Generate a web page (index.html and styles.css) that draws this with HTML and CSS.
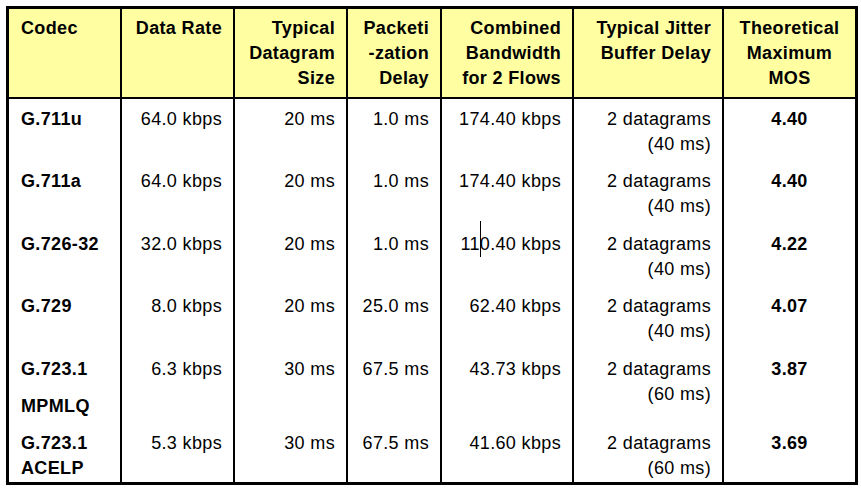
FILE: index.html
```html
<!DOCTYPE html>
<html>
<head>
<meta charset="utf-8">
<link rel="stylesheet" href="styles.css">
</head>
<body>
<div class="codec-table">
  <div class="th left">Codec</div>
  <div class="th">Data Rate</div>
  <div class="th">Typical<br>Datagram<br>Size</div>
  <div class="th">Packeti<br>-zation<br>Delay</div>
  <div class="th">Combined<br>Bandwidth<br>for 2 Flows</div>
  <div class="th">Typical Jitter<br>Buffer Delay</div>
  <div class="th center">Theoretical<br>Maximum<br>MOS</div>

  <div class="td left bold">G.711u</div>
  <div class="td">64.0 kbps</div>
  <div class="td">20 ms</div>
  <div class="td">1.0 ms</div>
  <div class="td">174.40 kbps</div>
  <div class="td">2 datagrams<br>(40 ms)</div>
  <div class="td center bold">4.40</div>

  <div class="td left bold">G.711a</div>
  <div class="td">64.0 kbps</div>
  <div class="td">20 ms</div>
  <div class="td">1.0 ms</div>
  <div class="td">174.40 kbps</div>
  <div class="td">2 datagrams<br>(40 ms)</div>
  <div class="td center bold">4.40</div>

  <div class="td left bold">G.726-32</div>
  <div class="td">32.0 kbps</div>
  <div class="td">20 ms</div>
  <div class="td">1.0 ms</div>
  <div class="td">11<span class="caret"></span>0.40 kbps</div>
  <div class="td">2 datagrams<br>(40 ms)</div>
  <div class="td center bold">4.22</div>

  <div class="td left bold">G.729</div>
  <div class="td">8.0 kbps</div>
  <div class="td">20 ms</div>
  <div class="td">25.0 ms</div>
  <div class="td">62.40 kbps</div>
  <div class="td">2 datagrams<br>(40 ms)</div>
  <div class="td center bold">4.07</div>

  <div class="td left bold">G.723.1<div class="para">MPMLQ</div></div>
  <div class="td">6.3 kbps</div>
  <div class="td">30 ms</div>
  <div class="td">67.5 ms</div>
  <div class="td">43.73 kbps</div>
  <div class="td">2 datagrams<br>(60 ms)</div>
  <div class="td center bold">3.87</div>

  <div class="td left bold last">G.723.1<br>ACELP</div>
  <div class="td last">5.3 kbps</div>
  <div class="td last">30 ms</div>
  <div class="td last">67.5 ms</div>
  <div class="td last">41.60 kbps</div>
  <div class="td last">2 datagrams<br>(60 ms)</div>
  <div class="td center bold last">3.69</div>
</div>
</body>
</html>
```
FILE: styles.css
```css
html, body {
  margin: 0;
  padding: 0;
  background: #ffffff;
}
body {
  padding: 6px 0 0 6px;
  font-family: "Liberation Sans", Arial, sans-serif;
  font-size: 18px;
  letter-spacing: 0.35px;
  color: #000;
}
.codec-table {
  width: 846px;
  height: 473px;
  border: 3px solid #000;
  display: grid;
  grid-template-columns: 111px 113px 113px 94px 132px 150px 133px;
  grid-template-rows: 90px 62px 63px 62px 63px 74px 1fr;
}
.th, .td {
  line-height: 25px;
  text-align: right;
  padding: 0 11px 0 12px;
  border-left: 2px solid #000;
  position: relative;
}
.th:first-child, .left {
  border-left: none;
}
.th {
  background: #ffffa2;
  font-weight: bold;
  padding-top: 7px;
  border-bottom: 2px solid #000;
}
.td {
  padding-top: 8px;
}
.left {
  text-align: left;
}
.center {
  text-align: center;
  padding-left: 8px;
  padding-right: 8px;
}
.bold {
  font-weight: bold;
}
.para {
  margin-top: 12px;
}
.caret {
  position: relative;
  display: inline-block;
  width: 0;
  height: 0;
}
.caret::after {
  content: "";
  position: absolute;
  left: 0;
  top: -29px;
  width: 1px;
  height: 36px;
  background: #000;
}
.td.last:not(.left)::before {
  content: "";
  position: absolute;
  left: -2px;
  bottom: -8px;
  width: 2px;
  height: 5px;
  background: #000;
}
```
